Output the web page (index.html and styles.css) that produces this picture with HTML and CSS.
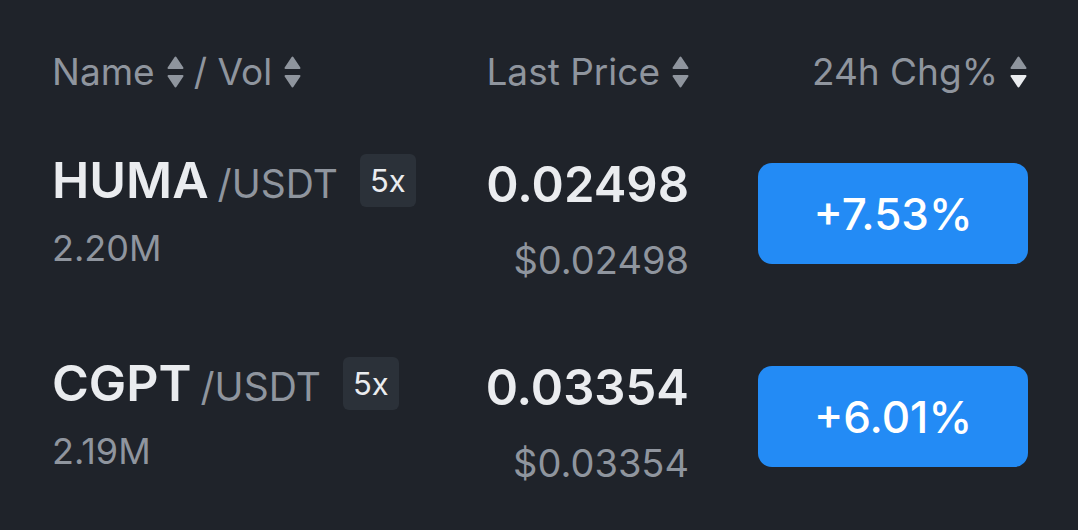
FILE: index.html
```html
<!DOCTYPE html>
<html lang="en">
<head>
  <meta charset="UTF-8" />
  <title>Markets</title>
  <link rel="stylesheet" href="styles.css">
</head>
<body>
<div class="market">
  <div class="head">
    <div class="h-name">
      <span class="sort">Name
        <svg class="arrows" viewBox="0 0 17 32"><path class="up" d="M8.5 1.5 L15.5 12 H1.5 Z"/><path class="down" d="M1.5 20 H15.5 L8.5 30.5 Z"/></svg>
      </span>
      <span class="sort">/ Vol
        <svg class="arrows" viewBox="0 0 17 32"><path class="up" d="M8.5 1.5 L15.5 12 H1.5 Z"/><path class="down" d="M1.5 20 H15.5 L8.5 30.5 Z"/></svg>
      </span>
    </div>
    <div class="h-price">
      <span class="sort">Last Price
        <svg class="arrows" viewBox="0 0 17 32"><path class="up" d="M8.5 1.5 L15.5 12 H1.5 Z"/><path class="down" d="M1.5 20 H15.5 L8.5 30.5 Z"/></svg>
      </span>
    </div>
    <div class="h-chg">
      <span class="sort">24h Chg%
        <svg class="arrows" viewBox="0 0 17 32"><path class="up" d="M8.5 1.5 L15.5 12 H1.5 Z"/><path class="down active" d="M1.5 20 H15.5 L8.5 30.5 Z"/></svg>
      </span>
    </div>
  </div>

  <div class="row">
    <div class="col-name">
      <div class="pair"><span class="base">HUMA</span><span class="quote">/USDT</span><span class="lev">5x</span></div>
      <div class="vol">2.20M</div>
    </div>
    <div class="col-price">
      <div class="price">0.02498</div>
      <div class="fiat">$0.02498</div>
    </div>
    <div class="col-chg">
      <div class="chg">+7.53%</div>
    </div>
  </div>

  <div class="row">
    <div class="col-name">
      <div class="pair"><span class="base">CGPT</span><span class="quote">/USDT</span><span class="lev">5x</span></div>
      <div class="vol">2.19M</div>
    </div>
    <div class="col-price">
      <div class="price">0.03354</div>
      <div class="fiat">$0.03354</div>
    </div>
    <div class="col-chg">
      <div class="chg">+6.01%</div>
    </div>
  </div>
</div>
</body>
</html>
```

FILE: styles.css
```css
body {
  margin: 0;
  background: #1f232a;
  font-family: "Inter", "Noto Sans", sans-serif;
  color: #eaecef;
}
.market {
  padding: 0 50px 0 52px;
}
.head,
.row {
  display: grid;
  grid-template-columns: 387px 250px 339px;
}
.head {
  height: 112px;
  font-size: 37px;
  line-height: 44px;
  color: #8f959e;
}
.h-name,
.h-price,
.h-chg {
  display: flex;
  padding-top: 50px;
  height: 44px;
}
.h-name {
  gap: 10px;
}
.h-price,
.h-chg {
  justify-content: flex-end;
}
.h-chg {
  padding-right: 1px;
}
.sort {
  display: inline-flex;
  align-items: center;
  gap: 12px;
  white-space: nowrap;
}
.arrows {
  width: 17px;
  height: 32px;
}
.arrows path {
  fill: #8f959e;
  stroke: #8f959e;
  stroke-width: 2;
  stroke-linejoin: round;
}
.arrows path.active {
  fill: #eaecef;
  stroke: #eaecef;
}
.row {
  height: 203px;
}
.col-name {
  padding-top: 40px;
}
.pair {
  display: flex;
  align-items: baseline;
  height: 56px;
  line-height: 56px;
}
.base {
  font-size: 50px;
  font-weight: 600;
}
.quote {
  margin-left: 9px;
  font-size: 39px;
  color: #8f959e;
}
.lev {
  align-self: center;
  margin-left: 22px;
  width: 56px;
  height: 53px;
  line-height: 53px;
  text-align: center;
  border-radius: 6px;
  background: #2b3139;
  font-size: 31px;
  color: #eaecef;
}
.vol {
  margin-top: 18px;
  font-size: 36px;
  line-height: 44px;
  color: #8f959e;
}
.col-price {
  padding-top: 43px;
  text-align: right;
}
.price {
  font-size: 49px;
  line-height: 60px;
  font-weight: 600;
}
.fiat {
  margin-top: 21px;
  font-size: 38px;
  line-height: 48px;
  color: #8f959e;
}
.col-chg {
  display: flex;
  justify-content: flex-end;
  align-items: center;
}
.chg {
  width: 270px;
  height: 101px;
  border-radius: 14px;
  background: #238bf5;
  color: #fff;
  font-size: 44px;
  font-weight: 500;
  display: flex;
  align-items: center;
  justify-content: center;
}
```
